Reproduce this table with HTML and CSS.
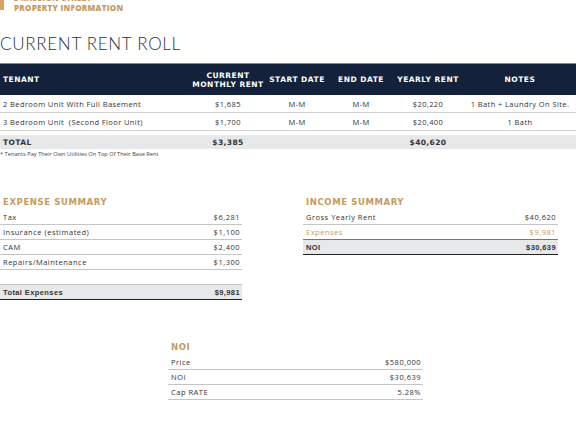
FILE: index.html
```html
<!DOCTYPE html>
<html lang="en">
<head>
  <meta charset="UTF-8" />
  <title>Property Information</title>
  <link rel="stylesheet" href="styles.css">
</head>
<body>
  <div class="brand">
    <div class="brand-bar"></div>
    <div class="brand-text">
      <div class="street">3 MISSION STREET</div>
      <div class="section">PROPERTY INFORMATION</div>
    </div>
  </div>

  <h1>CURRENT RENT ROLL</h1>

  <table class="rent-roll">
    <thead>
      <tr>
        <th class="tenant">TENANT</th>
        <th class="c-rent">CURRENT<br>MONTHLY RENT</th>
        <th class="c-start">START DATE</th>
        <th class="c-end">END DATE</th>
        <th class="c-year">YEARLY RENT</th>
        <th class="c-notes">NOTES</th>
      </tr>
    </thead>
    <tbody>
      <tr>
        <td class="tenant">2 Bedroom Unit With Full Basement</td>
        <td>$1,685</td>
        <td>M-M</td>
        <td>M-M</td>
        <td>$20,220</td>
        <td>1 Bath + Laundry On Site.</td>
      </tr>
      <tr>
        <td class="tenant">3 Bedroom Unit &nbsp;(Second Floor Unit)</td>
        <td>$1,700</td>
        <td>M-M</td>
        <td>M-M</td>
        <td>$20,400</td>
        <td>1 Bath</td>
      </tr>
      <tr class="spacer"><td colspan="6"></td></tr>
      <tr class="total">
        <td class="tenant">TOTAL</td>
        <td>$3,385</td>
        <td></td>
        <td></td>
        <td>$40,620</td>
        <td></td>
      </tr>
    </tbody>
  </table>
  <p class="footnote">* Tenants Pay Their Own Utilities On Top Of Their Base Rent</p>

  <div class="summaries">
    <div class="summary expense">
      <h2>EXPENSE SUMMARY</h2>
      <div class="line"><span>Tax</span><span>$6,281</span></div>
      <div class="line"><span>Insurance (estimated)</span><span>$1,100</span></div>
      <div class="line"><span>CAM</span><span>$2,400</span></div>
      <div class="line"><span>Repairs/Maintenance</span><span>$1,300</span></div>
      <div class="line blank"></div>
      <div class="line total"><span>Total Expenses</span><span>$9,981</span></div>
    </div>

    <div class="summary income">
      <h2>INCOME SUMMARY</h2>
      <div class="line"><span>Gross Yearly Rent</span><span>$40,620</span></div>
      <div class="line gold"><span>Expenses</span><span>$9,981</span></div>
      <div class="line total"><span>NOI</span><span>$30,639</span></div>
    </div>
  </div>

  <div class="summary noi">
    <h2>NOI</h2>
    <div class="line"><span>Price</span><span>$580,000</span></div>
    <div class="line"><span>NOI</span><span>$30,639</span></div>
    <div class="line"><span>Cap RATE</span><span>5.28%</span></div>
  </div>
</body>
</html>
```

FILE: styles.css
```css
body {
  margin: 0;
  font-family: "Open Sans", sans-serif;
  color: #333;
  background: #fff;
}
.brand {
  display: flex;
  align-items: flex-start;
  height: 13px;
  overflow: hidden;
}
.brand-bar {
  width: 4px;
  height: 10px;
  background: #d9a35e;
}
.brand-text {
  margin: -7px 0 0 10px;
  color: #c49a63;
  font-family: "Open Sans", sans-serif;
  font-weight: 800;
  font-size: 8px;
  letter-spacing: 0.3px;
  line-height: 10px;
}
h1 {
  margin: 22px 0 10px 0;
  font-family: "Lato", sans-serif;
  font-weight: 300;
  font-size: 17px;
  letter-spacing: 0.7px;
  color: #2b3140;
  line-height: 18px;
}
.rent-roll {
  width: 576px;
  border-collapse: collapse;
  font-size: 7.5px;
  letter-spacing: 0.4px;
  table-layout: fixed;
}
.rent-roll th {
  background: #13213a;
  color: #fff;
  font-family: "DejaVu Sans", sans-serif;
  font-weight: bold;
  font-size: 7.5px;
  letter-spacing: 0.5px;
  height: 31px;
  padding: 0;
  text-align: center;
  line-height: 9px;
  border-top: 1px solid #888;
}
.rent-roll th.tenant {
  text-align: left;
  padding-left: 3px;
}
.tenant { width: 189px; }
.c-rent { width: 72px; }
.c-start { width: 66px; }
.c-end { width: 62px; }
.c-year { width: 72px; }
.rent-roll td {
  height: 17px;
  padding: 0;
  text-align: center;
  border-bottom: 1px solid #cfcfcf;
}
.rent-roll td.tenant {
  text-align: left;
  padding-left: 3px;
}
.rent-roll .spacer td {
  height: 4px;
  border-bottom: none;
}
.rent-roll .total td {
  height: 14px;
  background: #e7e8e9;
  font-family: "DejaVu Sans", sans-serif;
  font-weight: bold;
  font-size: 7.5px;
  border-bottom: none;
}
.footnote {
  margin: 1px 0 0 0;
  font-size: 5.7px;
  color: #444;
}
.summaries {
  display: flex;
  margin-top: 39px;
}
.summary h2 {
  margin: 0 0 3px 0;
  padding-left: 3px;
  color: #c49a63;
  font-family: "DejaVu Sans", sans-serif;
  font-size: 8.5px;
  letter-spacing: 0.6px;
  line-height: 10px;
}
.summary {
  font-size: 7.5px;
  letter-spacing: 0.5px;
}
.line {
  display: flex;
  justify-content: space-between;
  align-items: center;
  height: 14px;
  padding: 0 2px 0 3px;
  border-bottom: 1px solid #c5c5c5;
}
.line.blank {
  height: 14px;
}
.line.total {
  background: #e7e8e9;
  font-family: "Liberation Sans", sans-serif;
  font-weight: bold;
  font-size: 7.5px;
  letter-spacing: 0.4px;
  border-bottom: 1px solid #222;
}
.line.gold {
  color: #c49a63;
  border-bottom-color: #777;
}
.expense {
  width: 242px;
}
.income {
  width: 255px;
  margin-left: 61px;
}
.noi {
  width: 255px;
  margin: 42px 0 0 168px;
}
```
